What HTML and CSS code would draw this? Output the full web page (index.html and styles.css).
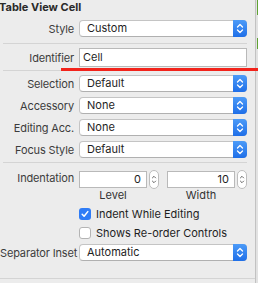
FILE: index.html
```html
<!DOCTYPE html>
<html lang="en">
<head>
    <meta charset="UTF-8">
    <title>Table View Cell</title>
    <link rel="stylesheet" href="styles.css">
</head>
<body>
    <div class="inspector">
        <div class="panel">
            <div class="title">Table View Cell</div>

            <div class="row row-style">
                <span class="label">Style</span>
                <div class="popup">Custom<span class="popup-arrows"><svg width="14" height="17" viewBox="0 0 14 17"><path d="M4.5 7 L7 4.5 L9.5 7 M4.5 10 L7 12.5 L9.5 10" fill="none" stroke="#fff" stroke-width="1.3" stroke-linecap="round" stroke-linejoin="round"/></svg></span></div>
            </div>

            <div class="sep sep-a"></div>

            <div class="row row-ident">
                <span class="label">Identifier</span>
                <div class="field">Cell</div>
            </div>

            <div class="sep sep-b"></div>

            <div class="popup-list">
                <div class="row">
                    <span class="label">Selection</span>
                    <div class="popup">Default<span class="popup-arrows"><svg width="14" height="17" viewBox="0 0 14 17"><path d="M4.5 7 L7 4.5 L9.5 7 M4.5 10 L7 12.5 L9.5 10" fill="none" stroke="#fff" stroke-width="1.3" stroke-linecap="round" stroke-linejoin="round"/></svg></span></div>
                </div>
                <div class="row">
                    <span class="label">Accessory</span>
                    <div class="popup">None<span class="popup-arrows"><svg width="14" height="17" viewBox="0 0 14 17"><path d="M4.5 7 L7 4.5 L9.5 7 M4.5 10 L7 12.5 L9.5 10" fill="none" stroke="#fff" stroke-width="1.3" stroke-linecap="round" stroke-linejoin="round"/></svg></span></div>
                </div>
                <div class="row">
                    <span class="label">Editing Acc.</span>
                    <div class="popup">None<span class="popup-arrows"><svg width="14" height="17" viewBox="0 0 14 17"><path d="M4.5 7 L7 4.5 L9.5 7 M4.5 10 L7 12.5 L9.5 10" fill="none" stroke="#fff" stroke-width="1.3" stroke-linecap="round" stroke-linejoin="round"/></svg></span></div>
                </div>
                <div class="row">
                    <span class="label">Focus Style</span>
                    <div class="popup">Default<span class="popup-arrows"><svg width="14" height="17" viewBox="0 0 14 17"><path d="M4.5 7 L7 4.5 L9.5 7 M4.5 10 L7 12.5 L9.5 10" fill="none" stroke="#fff" stroke-width="1.3" stroke-linecap="round" stroke-linejoin="round"/></svg></span></div>
                </div>
            </div>

            <div class="sep sep-c"></div>

            <div class="row row-indent">
                <span class="label">Indentation</span>
                <div class="number-pair">
                    <div class="number-group">
                        <div class="number-line">
                            <div class="number-field">0</div>
                            <span class="mini-stepper"><svg width="10" height="19" viewBox="0 0 10 19"><path d="M3 7.5 L5 5.5 L7 7.5 M3 11.5 L5 13.5 L7 11.5" fill="none" stroke="#444" stroke-width="1" stroke-linecap="round" stroke-linejoin="round"/></svg></span>
                        </div>
                        <div class="caption">Level</div>
                    </div>
                    <div class="number-group">
                        <div class="number-line">
                            <div class="number-field">10</div>
                            <span class="mini-stepper"><svg width="10" height="19" viewBox="0 0 10 19"><path d="M3 7.5 L5 5.5 L7 7.5 M3 11.5 L5 13.5 L7 11.5" fill="none" stroke="#444" stroke-width="1" stroke-linecap="round" stroke-linejoin="round"/></svg></span>
                        </div>
                        <div class="caption">Width</div>
                    </div>
                </div>
            </div>

            <div class="checks">
                <div class="check">
                    <span class="box checked"><svg width="12" height="12" viewBox="0 0 12 12"><path d="M3.2 6.3 L5.1 8.3 L8.8 3.6" fill="none" stroke="#fff" stroke-width="1.5" stroke-linecap="round" stroke-linejoin="round"/></svg></span>
                    Indent While Editing
                </div>
                <div class="check">
                    <span class="box"></span>
                    Shows Re-order Controls
                </div>
            </div>

            <div class="row row-inset">
                <span class="label">Separator Inset</span>
                <div class="popup">Automatic<span class="popup-arrows"><svg width="14" height="17" viewBox="0 0 14 17"><path d="M4.5 7 L7 4.5 L9.5 7 M4.5 10 L7 12.5 L9.5 10" fill="none" stroke="#fff" stroke-width="1.3" stroke-linecap="round" stroke-linejoin="round"/></svg></span></div>
            </div>

            <div class="sep sep-d"></div>
        </div>
        <div class="edge">
            <div class="edge-green"></div>
            <div class="edge-green second"></div>
        </div>
    </div>
    <div class="redline"></div>
</body>
</html>
```

FILE: styles.css
```css
body {
    margin: 0;
    background: #ececec;
    font-family: Inter, "Noto Sans", sans-serif;
    font-size: 11px;
    color: #222;
    width: 258px;
    height: 283px;
    overflow: hidden;
    position: relative;
}

.inspector {
    display: flex;
    height: 283px;
}

.panel {
    width: 247px;
    padding-right: 8px;
}

.title {
    font-weight: 700;
    font-size: 11px;
    line-height: 13px;
    color: #2a2a2a;
    margin-left: -1px;
    padding-top: 1px;
}

.row {
    display: grid;
    grid-template-columns: 74px 1fr;
    column-gap: 5px;
    align-items: center;
}

.label {
    text-align: right;
    color: #3c3c3c;
    white-space: nowrap;
    letter-spacing: -0.15px;
}

.row-style {
    margin-top: 6px;
}

.popup {
    position: relative;
    height: 17px;
    box-sizing: border-box;
    background: #fff;
    border: 1px solid #c4c4c4;
    border-bottom-color: #b0b0b0;
    border-radius: 4px;
    padding-left: 7px;
    line-height: 15px;
    color: #1e1e1e;
}

.popup-arrows {
    position: absolute;
    top: -1px;
    right: -1px;
    width: 14px;
    height: 17px;
    border-radius: 0 4px 4px 0;
    background: linear-gradient(#4c9bf8, #1f6fe8);
    display: flex;
}

.sep {
    height: 1px;
    background: #d4d4d4;
    margin-left: 3px;
}

.sep-a {
    margin-top: 6px;
}

.row-ident {
    margin-top: 4px;
}

.field {
    height: 19px;
    box-sizing: border-box;
    background: #fff;
    border: 1px solid #b9b9b9;
    padding-left: 3px;
    line-height: 17px;
    color: #1e1e1e;
}

.sep-b {
    margin-top: 3px;
}

.popup-list {
    margin-top: 4px;
    display: flex;
    flex-direction: column;
    gap: 5px;
}

.sep-c {
    margin-top: 4px;
}

.row-indent {
    margin-top: 7px;
    align-items: start;
}

.row-indent .label {
    line-height: 17px;
}

.number-pair {
    display: grid;
    grid-template-columns: 80px 80px;
    column-gap: 8px;
}

.number-line {
    display: flex;
    align-items: center;
    gap: 2px;
}

.number-field {
    width: 68px;
    height: 17px;
    box-sizing: border-box;
    background: #fff;
    border: 1px solid #b9b9b9;
    text-align: right;
    padding-right: 5px;
    line-height: 15px;
    color: #1e1e1e;
}

.mini-stepper {
    width: 10px;
    height: 19px;
    box-sizing: border-box;
    background: #fff;
    border: 1px solid #bdbdbd;
    border-radius: 5px;
    display: flex;
    justify-content: center;
}

.mini-stepper svg {
    margin-top: -1px;
}

.caption {
    width: 68px;
    text-align: center;
    line-height: 12px;
    margin-top: 0;
    color: #333;
}

.checks {
    margin-top: 5px;
    margin-left: 79px;
    display: flex;
    flex-direction: column;
    gap: 3px;
}

.check {
    display: flex;
    align-items: center;
    gap: 5px;
    height: 16px;
    color: #1e1e1e;
    white-space: nowrap;
}

.box {
    width: 12px;
    height: 12px;
    box-sizing: border-box;
    border: 1px solid #b4b4b4;
    border-radius: 3px;
    background: #fff;
    display: flex;
}

.box.checked {
    border: none;
    background: #2f7cf6;
}

.row-inset {
    margin-top: 3px;
}

.sep-d {
    margin-top: 17px;
    margin-left: 0;
    margin-right: -8px;
}

.edge {
    width: 3px;
    border-left: 1px solid #c2c2c2;
    background: #e2e2e2;
    position: relative;
}

.edge-green {
    height: 15px;
    background: #5fa233;
    margin-left: 1px;
}

.edge-green.second {
    margin-top: 23px;
    height: 11px;
}

.redline {
    position: absolute;
    left: 61px;
    top: 68px;
    width: 197px;
    height: 3px;
    background: #f2231b;
}
```
